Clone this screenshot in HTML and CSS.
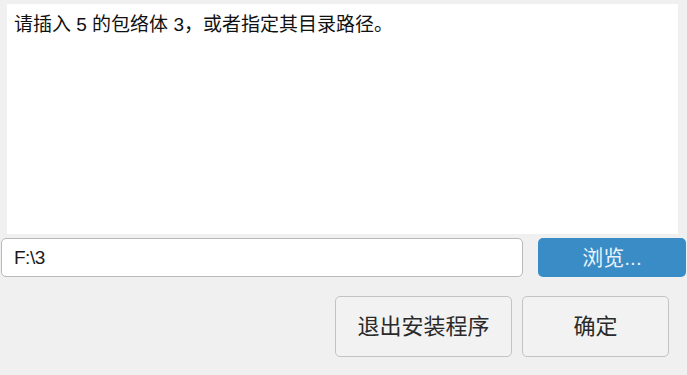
FILE: index.html
```html
<!DOCTYPE html>
<html lang="zh-CN">
<head>
<meta charset="utf-8">
<link rel="stylesheet" href="styles.css">
</head>
<body>
<div class="dialog">
  <div class="message">请插入 5 的包络体 3，或者指定其目录路径。</div>
  <div class="path-row">
    <div class="path-input">F:\3</div>
    <div class="browse">浏览...</div>
  </div>
  <div class="actions">
    <div class="btn btn-exit">退出安装程序</div>
    <div class="btn btn-ok">确定</div>
  </div>
</div>
</body>
</html>
```
FILE: styles.css
```css
html, body {
  margin: 0;
  padding: 0;
  background: #f0f0f0;
}
.dialog {
  width: 687px;
  height: 375px;
  box-sizing: border-box;
  padding-top: 4px;
  font-family: "Liberation Sans", "Noto Sans CJK SC", sans-serif;
  color: #1a1a1a;
  overflow: hidden;
}
.message {
  margin: 0 9px 0 7px;
  height: 230px;
  box-sizing: border-box;
  background: #ffffff;
  padding: 8px 0 0 7px;
  font-size: 19px;
  line-height: 26px;
  color: #111;
}
.path-row {
  display: flex;
  gap: 15px;
  margin-top: 4px;
  padding-left: 1px;
  height: 39px;
}
.path-input {
  width: 522px;
  box-sizing: border-box;
  border: 1px solid #b9b9b9;
  border-radius: 5px;
  background: #ffffff;
  padding-left: 12px;
  font-size: 19px;
  line-height: 37px;
  letter-spacing: -0.5px;
}
.browse {
  width: 148px;
  background: #3a8cc6;
  border-radius: 5px;
  color: #e8f2fa;
  text-align: center;
  font-size: 21px;
  line-height: 39px;
}
.actions {
  display: flex;
  justify-content: flex-end;
  gap: 10px;
  margin-top: 19px;
  padding-right: 18px;
}
.btn {
  height: 61px;
  box-sizing: border-box;
  border: 1px solid #c3c3c3;
  border-radius: 5px;
  background: #f2f2f2;
  color: #2a2a2a;
  text-align: center;
  font-size: 22px;
  line-height: 59px;
}
.btn-exit { width: 177px; }
.btn-ok { width: 147px; }
```
